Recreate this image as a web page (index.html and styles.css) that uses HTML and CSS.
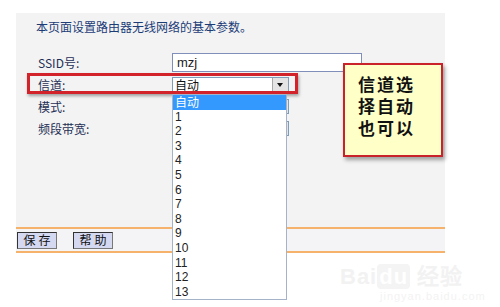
FILE: index.html
```html
<!DOCTYPE html>
<html lang="zh-CN">
<head>
    <meta charset="UTF-8">
    <title>无线网络基本设置</title>
    <link rel="stylesheet" href="styles.css">
</head>
<body>
    <div class="panel">
        <p class="intro">本页面设置路由器无线网络的基本参数。</p>
        <div class="fields">
            <div class="row">
                <span class="label">SSID号:</span>
                <div class="text-input">mzj</div>
            </div>
            <div class="row">
                <span class="label">信道:</span>
                <div class="select">
                    <span>自动</span>
                    <span class="arrow"></span>
                </div>
            </div>
            <div class="row">
                <span class="label">模式:</span>
                <div class="select"><span></span><span class="arrow"></span></div>
            </div>
            <div class="row">
                <span class="label">频段带宽:</span>
                <div class="select"><span></span><span class="arrow"></span></div>
            </div>
        </div>
        <div class="actions">
            <button class="btn">保存</button>
            <button class="btn">帮助</button>
        </div>

        <!-- 标注层 -->
        <div class="highlight"></div>
        <ul class="dropdown">
            <li class="active">自动</li>
            <li>1</li><li>2</li><li>3</li><li>4</li><li>5</li><li>6</li>
            <li>7</li><li>8</li><li>9</li><li>10</li><li>11</li><li>12</li><li>13</li>
        </ul>
        <div class="callout">信道选<br>择自动<br>也可以</div>
    </div>
    <div class="watermark">Bai<span>du</span> 经验<small>jingyan.baidu.com</small></div>
</body>
</html>
```

FILE: styles.css
```css
body {
    margin: 0;
    background: #fff;
    font-family: "Noto Sans CJK SC", "Liberation Sans", sans-serif;
    font-size: 12px;
    color: #1f3366;
    width: 500px;
    height: 307px;
    overflow: hidden;
    position: relative;
}

.panel {
    position: relative;
    margin: 13px 0 0 16px;
    width: 429px;
    background: #f3f3f3;
}

.intro {
    margin: 0;
    padding: 6px 0 16px 20px;
    line-height: 16px;
    color: #1c3c78;
}

.fields { margin-bottom: 88px; }

.row {
    display: flex;
    align-items: center;
    height: 22px;
    padding-left: 22px;
}

.label {
    width: 134px;
    color: #1f2f55;
}

.text-input {
    width: 184px;
    height: 17px;
    line-height: 17px;
    padding-left: 4px;
    background: #fff;
    border: 1px solid #7f8fb9;
    font-family: "Liberation Sans", sans-serif;
    font-size: 13px;
    color: #222;
}

.select {
    display: flex;
    align-items: center;
    justify-content: space-between;
    width: 113px;
    height: 13px;
    line-height: 13px;
    padding-left: 2px;
    background: #fff;
    border: 1px solid #7f9db9;
    color: #111;
}

.arrow {
    width: 15px;
    height: 13px;
    background: #e4e4e4;
    border-left: 1px solid #a8a8a8;
    position: relative;
}
.arrow::after {
    content: "";
    position: absolute;
    left: 4px;
    top: 5px;
    border: 3px solid transparent;
    border-top: 4px solid #111;
    border-bottom: 0;
}

.actions {
    display: flex;
    align-items: center;
    gap: 16px;
    height: 22px;
    padding-left: 1px;
    border-top: 2px solid #f6b26b;
    border-bottom: 2px solid #f6b26b;
    background: #f4f4f6;
}

.btn {
    width: 40px;
    height: 17px;
    padding: 0;
    font-family: inherit;
    font-size: 12px;
    line-height: 14px;
    letter-spacing: 3px;
    text-indent: 3px;
    color: #111;
    background: #d4d8f0;
    border: 1px solid #333;
    border-right-color: #777;
    border-bottom-color: #777;
}

.highlight {
    position: absolute;
    left: 11px;
    top: 60px;
    width: 265px;
    height: 15px;
    border: 3px solid #d2232a;
    box-shadow: 1px 2px 3px rgba(0,0,0,0.35);
}

.dropdown {
    position: absolute;
    left: 156px;
    top: 81px;
    width: 113px;
    margin: 0;
    padding: 0;
    list-style: none;
    background: #fff;
    border: 1px solid #a5b3c8;
    font-family: "Liberation Sans", "Noto Sans CJK SC", sans-serif;
    font-size: 12px;
    color: #222;
}
.dropdown li {
    height: 14.6px;
    line-height: 14.6px;
    padding-left: 2px;
}
.dropdown li.active {
    background: #3399ff;
    color: #fff;
    font-family: "Noto Sans CJK SC", sans-serif;
}

.callout {
    position: absolute;
    left: 327px;
    top: 50px;
    width: 83px;
    height: 82px;
    padding: 8px 0 0 13px;
    background: #ffffc8;
    border: 2px solid #c9222a;
    box-shadow: 2px 3px 4px rgba(0,0,0,0.35);
    font-size: 17px;
    font-weight: bold;
    line-height: 22px;
    letter-spacing: 2px;
    color: #111;
}

.watermark {
    position: absolute;
    left: 340px;
    top: 258px;
    font-family: "Liberation Sans", sans-serif;
    font-size: 22px;
    font-weight: bold;
    color: #f2f2f2;
    letter-spacing: 1px;
}
.watermark span {
    background: #f4f4f4;
    color: #fff;
    border-radius: 4px;
    padding: 0 2px;
}
.watermark small {
    display: block;
    font-size: 11px;
    font-weight: normal;
    color: #f3f3f3;
    margin-left: 40px;
}
```
